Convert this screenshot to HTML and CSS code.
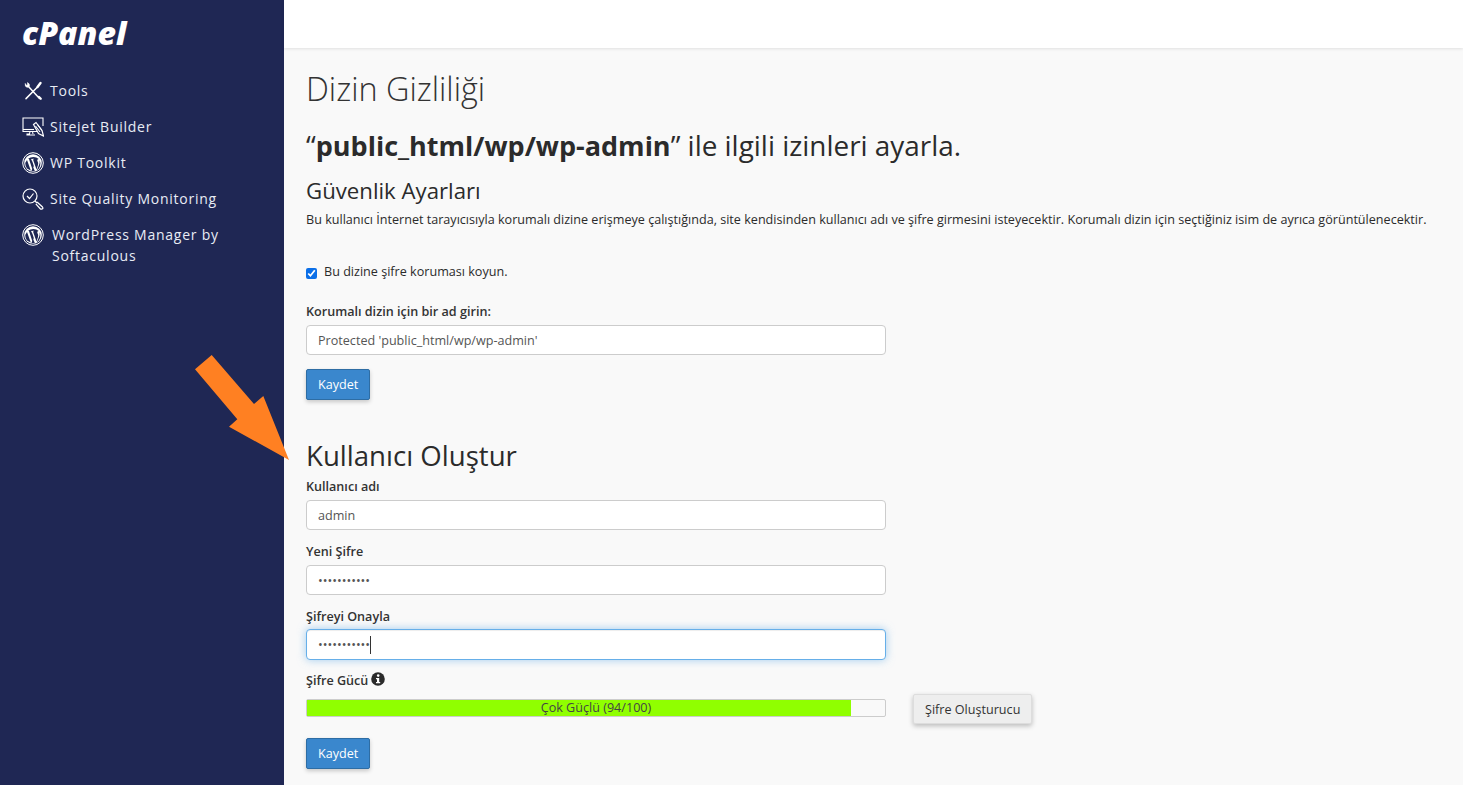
FILE: index.html
```html
<!DOCTYPE html>
<html lang="tr">
<head>
<meta charset="utf-8">
<title>Dizin Gizliliği</title>
<link rel="stylesheet" href="styles.css">
</head>
<body>
<div class="app">
  <aside class="sidebar">
    <div class="logo">cPanel</div>
    <nav class="nav">
      <a class="nav-item">
        <svg class="ico" viewBox="0 0 22 22" fill="none" stroke="#fff" stroke-linecap="round" stroke-linejoin="round"><path d="M6.500 6.500 L17.500 18.500" stroke-width="1.500"/><path d="M3.200 3.800 Q2.700 6.800 5 7.300 Q7 7.600 7.500 5.500 Q7.700 3.700 5.500 2.600 L5.600 5 L4.500 5.200 Z" fill="#fff" stroke-width=".6"/><path d="M16.800 16.800 L18.800 18.800" stroke-width="2.200"/><path d="M15 7.500 L4 18.600" stroke-width="1.500"/><path d="M15.500 7 L18.500 3" stroke-width="2.400"/></svg>
        <span>Tools</span>
      </a>
      <a class="nav-item">
        <svg class="ico" viewBox="0 0 22 22" fill="none" stroke="#fff" stroke-width="1.100"><path d="M16 15.500 H1 V2 H21 V10"/><path d="M1 13.500 H12"/><path d="M8 15.500 L7.500 18 H5 V19 H13"/><path d="M10.500 15.500 L11 18"/><path d="M11.500 8.500 L14 6.500 L20 14.500 L21.500 20 L16.500 17.500 Z" fill="#1f2754" stroke-width="1.200"/><path d="M13.500 10 L18 16 M15.500 8.500 L20 14.500"/></svg>
        <span>Sitejet Builder</span>
      </a>
      <a class="nav-item">
        <svg class="ico" viewBox="0 0 22 22"><use href="#wp"/></svg>
        <span>WP Toolkit</span>
      </a>
      <a class="nav-item">
        <svg class="ico" viewBox="0 0 22 22" fill="none" stroke="#fff" stroke-width="1.200"><circle cx="8" cy="8" r="7"/><path d="M5 8 L7.500 10.500 L11.500 5.500"/><path d="M13 13 L15 15"/><path d="M15 14 L20.500 19 Q21.500 20.500 20 21 Q19 21.500 18 20.500 L13.800 15.800"/></svg>
        <span>Site Quality Monitoring</span>
      </a>
      <a class="nav-item nav-item-wide">
        <svg class="ico" viewBox="0 0 22 22"><use href="#wp"/></svg>
        <span>WordPress Manager by Softaculous</span>
      </a>
    </nav>
  </aside>

  <div class="content">
    <header class="topbar"></header>
    <main class="main">
      <h1 class="page-title">Dizin Gizliliği</h1>
      <h2 class="path-title">“<strong>public_html/wp/wp-admin</strong>” ile ilgili izinleri ayarla.</h2>
      <h3 class="section-title">Güvenlik Ayarları</h3>
      <p class="help">Bu kullanıcı İnternet tarayıcısıyla korumalı dizine erişmeye çalıştığında, site kendisinden kullanıcı adı ve şifre girmesini isteyecektir. Korumalı dizin için seçtiğiniz isim de ayrıca görüntülenecektir.</p>

      <label class="check"><input type="checkbox" checked><span>Bu dizine şifre koruması koyun.</span></label>

      <div class="field field-name">
        <label class="label">Korumalı dizin için bir ad girin:</label>
        <input class="input" type="text" value="Protected 'public_html/wp/wp-admin'">
      </div>
      <button class="btn">Kaydet</button>

      <h2 class="create-title">Kullanıcı Oluştur</h2>
      <div class="field">
        <label class="label">Kullanıcı adı</label>
        <input class="input" type="text" value="admin">
      </div>
      <div class="field">
        <label class="label">Yeni Şifre</label>
        <input class="input" type="password" value="12345678901">
      </div>
      <div class="field field-focus">
        <label class="label">Şifreyi Onayla</label>
        <div class="input input-focus"><span class="dots">•••••••••••</span><span class="caret"></span></div>
      </div>
      <div class="strength-label">
        <label class="label">Şifre Gücü</label>
        <svg class="info" viewBox="0 0 14 14"><circle cx="7" cy="7" r="6.800" fill="#2b2b2b"/><circle cx="7.200" cy="3.600" r="1.300" fill="#fff"/><path d="M5 6 H8.200 V10 H9.200 V11.200 H5 V10 H6 V7.200 H5 Z" fill="#fff"/></svg>
      </div>
      <div class="strength-row">
        <div class="meter">
          <div class="meter-fill" style="width:94.2%"></div>
          <span class="meter-text">Çok Güçlü (94/100)</span>
        </div>
        <button class="btn btn-light">Şifre Oluşturucu</button>
      </div>
      <button class="btn btn-save">Kaydet</button>
    </main>
  </div>
</div>

<svg class="arrow" viewBox="0 0 1463 785"><polygon points="211.700,355 195,369.300 237.300,419.300 229,426.700 289,460 263.300,396 254,404" fill="#ff8022"/></svg>

<svg class="defs" width="0" height="0">
  <defs>
    <g id="wp">
      <circle cx="11" cy="11" r="10.300" fill="none" stroke="#fff" stroke-width="1"/>
      <circle cx="11" cy="11" r="8.800" fill="#fff"/>
      <path d="M3.200 11 Q3.200 14 5 16.500 L8.800 18.500 L5 8 Z M6 6.800 L7 7 L10.500 17.800 L11.800 14 L10.500 10 L9.500 8 L9 7 L12 6.800 L11.800 7.300 L11 7.500 L14.500 17.500 L16 13 Q16.600 11 15.600 9.600 Q15 8.600 15.500 7.500 Q16 6.800 16.800 6.900 A8.500 8.500 0 0 0 6 6.800 Z M17.600 8 Q18 11 17 13 L14.600 18.700 A8.500 8.500 0 0 0 17.600 8 Z M11 14.800 L9.400 19.200 L12.800 19.100 Z" fill="#1f2754"/>
    </g>
  </defs>
</svg>
</body>
</html>
```

FILE: styles.css
```css
* { box-sizing: border-box; }
html, body { margin: 0; height: 785px; overflow: hidden; }
body { font-family: "Open Sans", sans-serif; font-size: 12.6px; color: #2b2b2b; background: #f9f9f9; }

.app { display: flex; height: 785px; }

.sidebar { flex: 0 0 284px; background: #1f2754; color: #e8ecf4; padding: 15px 0 0 22px; }
.logo { height: 58px; font-size: 32px; line-height: 36px; font-weight: 800; font-style: italic; color: #fff; }
.nav { display: flex; flex-direction: column; }
.nav-item { display: flex; align-items: flex-start; gap: 6px; min-height: 36px; padding-top: 7px; font-size: 14px; line-height: 21px; letter-spacing: 0.75px; }
.nav-item-wide { gap: 8px; }
.nav-item-wide span { width: 180px; }
.ico { flex: 0 0 22px; width: 22px; height: 22px; }

.content { flex: 1; display: flex; flex-direction: column; min-width: 0; }
.topbar { height: 48px; background: #fff; box-shadow: 0 1px 3px rgba(0,0,0,.1); }
.main { padding: 0 22px; }

.page-title { margin: 20px 0 0; font-size: 32.4px; line-height: 40px; font-weight: 300; color: #333; }
.path-title { margin: 21px 0 0; font-size: 27.9px; line-height: 33px; font-weight: 400; color: #2b2b2b; }
.path-title strong { font-size: 27px; font-weight: 700; }
.section-title { margin: 15px 0 0; font-size: 22.2px; line-height: 27px; font-weight: 400; color: #2b2b2b; }
.help { margin: 7px 0 0; font-size: 12.6px; line-height: 18px; white-space: nowrap; }

.check { display: flex; align-items: center; gap: 7px; margin-top: 34px; line-height: 18px; }
.check input { margin: 2px 0 0; width: 11px; height: 11px; accent-color: #0b6fe8; }

.field { display: flex; flex-direction: column; }
.field-name { margin-top: 21px; }
.field + .field { margin-top: 12px; }
.label { display: block; font-weight: 600; font-size: 12.6px; line-height: 18px; color: #333; padding-top: 1px; margin-bottom: 4px; }
.input { display: flex; align-items: center; width: 580px; height: 30px; padding: 0 11px; border: 1px solid #ccc; border-radius: 4px; background: #fff; font: 12.6px "Open Sans", sans-serif; color: #555; outline: none; }
.field-focus .label { margin-bottom: 3px; }
.input-focus { height: 31px; border-color: #66afe9; box-shadow: inset 0 1px 1px rgba(0,0,0,.075), 0 0 8px rgba(102,175,233,.6); }
.caret { display: inline-block; width: 1px; height: 18px; background: #333; }

.btn { display: block; height: 31px; padding: 0 11px; margin-top: 14px; border: 1px solid #2e6da4; border-radius: 2px; background: #3a87cd; color: #fff; font: 12.6px "Open Sans", sans-serif; box-shadow: 0 2px 4px rgba(0,0,0,.2); }
.btn-light { height: 30px; margin: 0; background: #eee; border: 1px solid #ddd; color: #333; box-shadow: 0 2px 5px rgba(0,0,0,.25); }
.btn-save { margin-top: 14px; }

.create-title { margin: 36px 0 0; font-size: 27.6px; line-height: 38px; font-weight: 400; color: #2b2b2b; }
.create-title + .field { margin-top: 3px; }

.strength-label { display: flex; align-items: flex-start; gap: 3px; margin-top: 11px; }
.info { width: 14px; height: 14px; margin-top: 1px; }
.strength-row { display: flex; align-items: center; gap: 27px; }
.meter { position: relative; width: 580px; height: 18px; margin-bottom: 2px; border: 1px solid #ccc; border-radius: 2px; background: #f9f9f9; }
.meter-fill { height: 100%; background: #90ff00; }
.meter-text { position: absolute; inset: 0; text-align: center; font-size: 12.6px; line-height: 15px; color: #444; }

.arrow { position: absolute; left: 0; top: 0; width: 1463px; height: 785px; pointer-events: none; }
.defs { position: absolute; }
```
